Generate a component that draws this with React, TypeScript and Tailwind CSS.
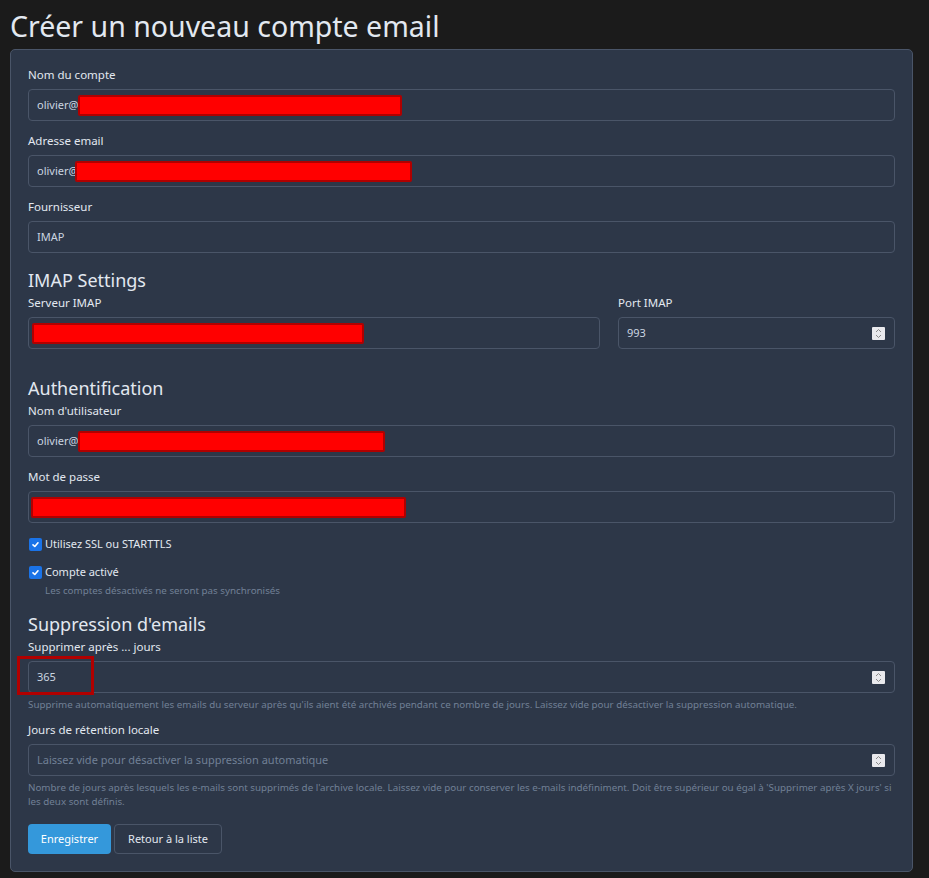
import type { ReactNode } from "react";

const Spinner = () => (
  <span className="ml-auto flex h-[13px] w-[13px] flex-col items-center justify-center rounded-[1px] bg-[#e9e9ed]">
    <svg width="7" height="11" viewBox="0 0 7 11" fill="none" stroke="#8a8a8a" strokeWidth="1">
      <path d="M1 4 L3.5 1.5 L6 4" />
      <path d="M1 7 L3.5 9.5 L6 7" />
    </svg>
  </span>
);

const Redacted = ({ width, className = "" }: { width: number; className?: string }) => (
  <span
    className={`inline-block h-[21px] rounded-[2px] border-2 border-[#b00000] bg-[#ff0000] ${className}`}
    style={{ width }}
  />
);

const Label = ({ children }: { children: ReactNode }) => (
  <label className="mb-[5px] block text-[11.5px] leading-[18px] text-[#e2e8f0]">{children}</label>
);

const Field = ({ label, children }: { label: string; children: ReactNode }) => (
  <div className="mb-[11px]">
    <Label>{label}</Label>
    {children}
  </div>
);

const Input = ({ children, tight = false }: { children: ReactNode; tight?: boolean }) => (
  <div
    className={`flex h-[32px] items-center rounded-[4px] border border-[#4a5568] bg-[#2d3748] pr-[9px] text-[11px] text-[#cbd5e0] ${
      tight ? "pl-[2px]" : "pl-[8px]"
    }`}
  >
    {children}
  </div>
);

const Check = ({ label }: { label: string }) => (
  <div className="flex h-[18px] items-center">
    <span className="ml-[1px] flex h-[13px] w-[13px] items-center justify-center rounded-[2px] bg-[#1a73e8]">
      <svg width="9" height="9" viewBox="0 0 9 9" fill="none" stroke="white" strokeWidth="1.6" strokeLinecap="round" strokeLinejoin="round">
        <path d="M2 4.8 L3.8 6.5 L7 2.8" />
      </svg>
    </span>
    <span className="ml-[3px] text-[11px] text-[#e2e8f0]">{label}</span>
  </div>
);

const Heading = ({ children, className = "" }: { children: ReactNode; className?: string }) => (
  <h2 className={`text-[18px] leading-[27px] text-[#e2e8f0] ${className}`}>{children}</h2>
);

const Help = ({ children, className = "" }: { children: ReactNode; className?: string }) => (
  <p className={`text-[9.8px] leading-[14px] text-[#718096] ${className}`}>{children}</p>
);

export default function App() {
  return (
    <div className="min-h-[878px] bg-[#1b1b1b] pl-[10px] pr-[16px] font-['Noto_Sans',sans-serif]">
      <h1 className="pt-[9px] text-[28.5px] leading-[34px] text-[#e2e8f0]">Créer un nouveau compte email</h1>

      <div className="mt-[6px] rounded-[5px] border border-[#4a5568] bg-[#2d3748] px-[17px] pt-[16px] pb-[17px]">
        <Field label="Nom du compte">
          <Input>
            <span>olivier@</span>
            <Redacted width={324} />
          </Input>
        </Field>
        <Field label="Adresse email">
          <Input>
            <span>olivier@</span>
            <Redacted width={337} className="-ml-[3px]" />
          </Input>
        </Field>
        <Field label="Fournisseur">
          <Input>IMAP</Input>
        </Field>

        <Heading className="mt-[14px]">IMAP Settings</Heading>
        <div className="grid grid-cols-[1fr_277px] gap-[18px]">
          <Field label="Serveur IMAP">
            <Input tight>
              <Redacted width={332} className="ml-[1px] h-[20px]" />
            </Input>
          </Field>
          <Field label="Port IMAP">
            <Input>
              <span>993</span>
              <Spinner />
            </Input>
          </Field>
        </div>

        <Heading className="mt-[15px]">Authentification</Heading>
        <Field label="Nom d'utilisateur">
          <Input>
            <span>olivier@</span>
            <Redacted width={307} className="h-[20px]" />
          </Input>
        </Field>
        <Field label="Mot de passe">
          <Input tight>
            <Redacted width={375} className="h-[19px]" />
          </Input>
        </Field>

        <div className="mt-[12px]">
          <Check label="Utilisez SSL ou STARTTLS" />
        </div>
        <div className="mt-[10px]">
          <Check label="Compte activé" />
        </div>
        <Help className="mt-[3px] pl-[17px]">Les comptes désactivés ne seront pas synchronisés</Help>

        <Heading className="mt-[13px]">Suppression d'emails</Heading>
        <div>
          <Label>Supprimer après ... jours</Label>
          <div className="relative">
            <Input>
              <span>365</span>
              <Spinner />
            </Input>
            <span className="absolute -top-[5px] -left-[11px] h-[39px] w-[77px] border-[3px] border-[#b00000]" />
          </div>
          <Help className="mt-[5px]">
            Supprime automatiquement les emails du serveur après qu'ils aient été archivés pendant ce nombre de jours. Laissez vide pour désactiver la suppression automatique.
          </Help>
        </div>

        <div className="mt-[9px]">
          <Label>Jours de rétention locale</Label>
          <Input>
            <span className="text-[#718096]">Laissez vide pour désactiver la suppression automatique</span>
            <Spinner />
          </Input>
          <Help className="mt-[5px]">
            Nombre de jours après lesquels les e-mails sont supprimés de l'archive locale. Laissez vide pour conserver les e-mails indéfiniment. Doit être supérieur ou égal à 'Supprimer après X jours' si les deux sont définis.
          </Help>
        </div>

        <div className="mt-[15px] flex gap-[3px]">
          <button type="button" className="h-[30px] w-[83px] rounded-[4px] bg-[#3498db] text-[11px] text-white">
            Enregistrer
          </button>
          <button type="button" className="h-[30px] w-[108px] rounded-[4px] border border-[#4a5568] text-[11px] text-[#e2e8f0]">
            Retour à la liste
          </button>
        </div>
      </div>
    </div>
  );
}
